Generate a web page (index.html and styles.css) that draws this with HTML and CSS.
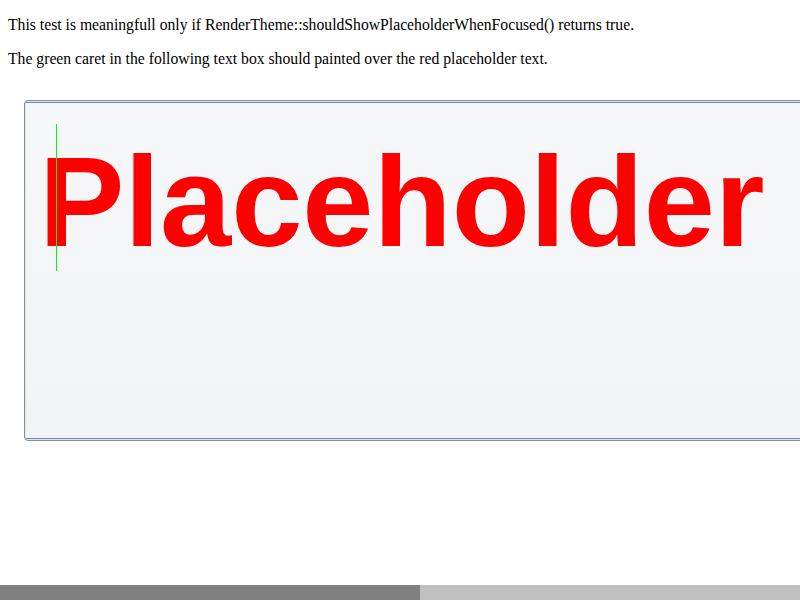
FILE: index.html
```html
<!DOCTYPE html>
<html>
<head>
<meta charset="utf-8">
<link rel="stylesheet" href="styles.css">
</head>
<body>
<div class="page">
  <p>This test is meaningfull only if RenderTheme::shouldShowPlaceholderWhenFocused() returns true.</p>
  <p>The green caret in the following text box should painted over the red placeholder text.</p>
  <div class="field">
    <div class="field-inner">
      <div class="placeholder">Placeholder</div>
      <div class="caret"></div>
    </div>
  </div>
</div>
<div class="hscroll"><div class="hscroll-thumb"></div></div>
</body>
</html>
```
FILE: styles.css
```css
body {
  margin: 0;
  font-family: "Liberation Serif", serif;
  font-size: 15.7px;
  color: #000;
  background: #fff;
}
.page {
  width: 800px;
  height: 585px;
  box-sizing: border-box;
  padding: 0 8px;
  overflow: hidden;
}
p {
  margin: 16px 0;
  line-height: 18px;
}
.field {
  margin: 32px 0 0 16px;
  width: 1500px;
  height: 339px;
  border: 1px solid #8f8f8f;
  border-radius: 4px;
  background: #dfe3e8;
}
.field-inner {
  position: relative;
  margin: 1px 1px 0 1px;
  height: 337px;
  border-top: 1px solid #6d84c8;
  border-bottom: 1px solid #6d84c8;
  background: linear-gradient(#f5f7f8, #f2f4f5);
  box-sizing: border-box;
  padding: 25px 0 0 13px;
}
.placeholder {
  font-family: "Liberation Sans", Arial, sans-serif;
  font-weight: bold;
  font-size: 128px;
  line-height: normal;
  color: #ff0000;
}
.caret {
  position: absolute;
  left: 30px;
  top: 21px;
  width: 1px;
  height: 147px;
  background: #00ff00;
}
.hscroll {
  position: fixed;
  left: 0;
  bottom: 0;
  width: 800px;
  height: 15px;
  background: #c0c0c0;
}
.hscroll-thumb {
  width: 420px;
  height: 15px;
  background: #808080;
}
```
